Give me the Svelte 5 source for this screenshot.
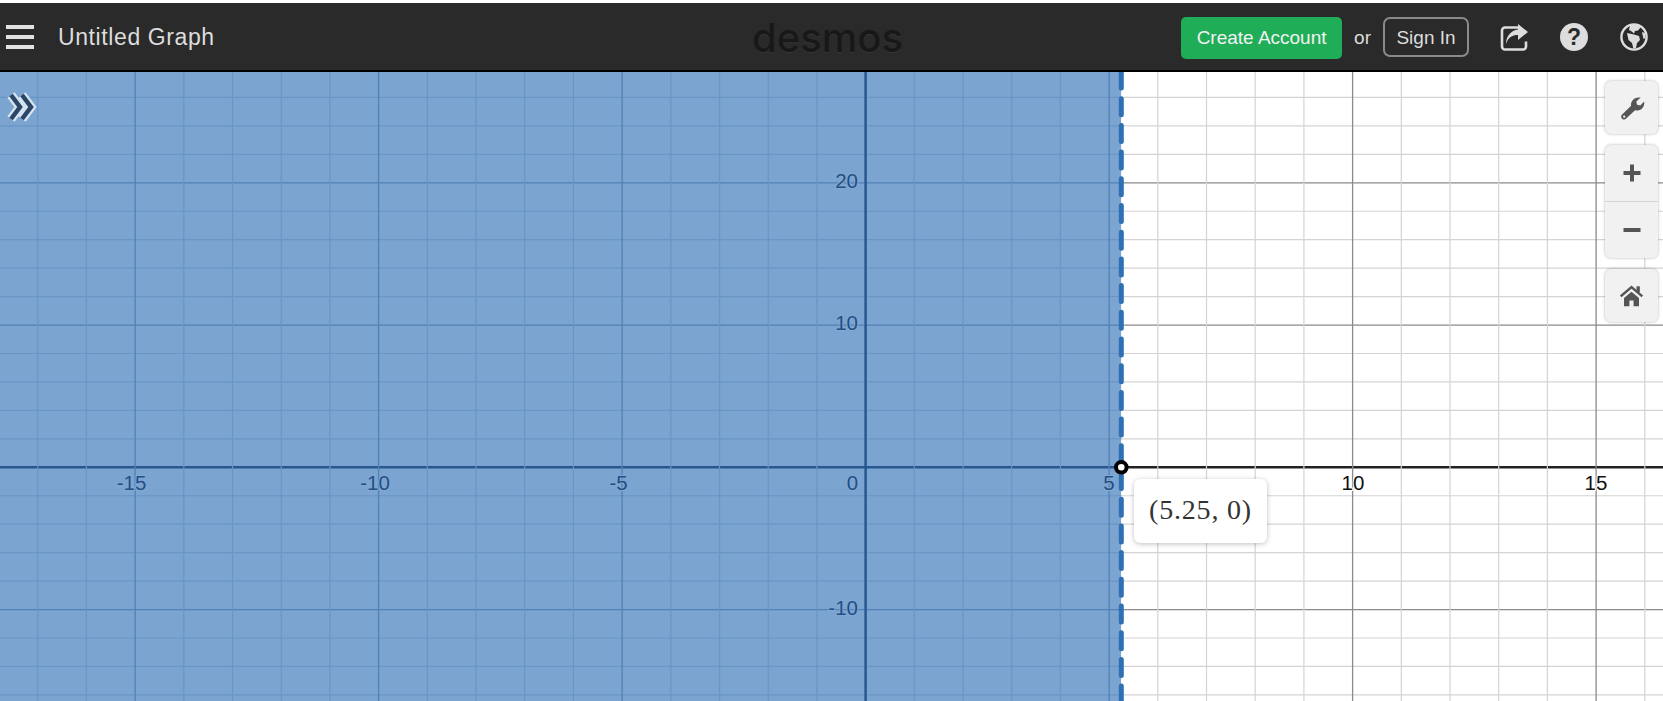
<script>
  // graph geometry, in page pixels
  const originX = 865.6;
  const originY = 467.3;
  const unitX = 48.7;
  const stepY = 28.45; // 2 y units
  const boundaryX = 1121.3;

  const range = (from, to) => Array.from({ length: to - from + 1 }, (_, i) => from + i);

  const vertical = range(-18, 16).map((i) => ({ x: originX + i * unitX, major: i % 5 === 0, axis: i === 0 }));
  const horizontal = range(-8, 14).map((i) => ({ y: originY - i * stepY, major: i % 5 === 0, axis: i === 0 }));

  const xLabels = [
    { text: "-15", x: 131.5, dark: true },
    { text: "-10", x: 375, dark: true },
    { text: "-5", x: 618.5, dark: true },
    { text: "0", x: 852.5, dark: true },
    { text: "5", x: 1109, dark: true },
    { text: "10", x: 1353 },
    { text: "15", x: 1596 },
  ];
  const yLabels = [
    { text: "20", y: 188 },
    { text: "10", y: 330 },
    { text: "-10", y: 615 },
  ];
</script>

{#snippet grid(cls)}
  <g class={cls}>
    {#each horizontal as l}
      <line x1="0" x2="1663" y1={l.y} y2={l.y} class:major={l.major} class:axis={l.axis} />
    {/each}
    {#each vertical as l}
      <line x1={l.x} x2={l.x} y1="72" y2="701" class:major={l.major} class:axis={l.axis} />
    {/each}
  </g>
{/snippet}

<div class="page">
  <header>
    <div class="left">
      <button class="menu" aria-label="Menu"><i></i><i></i><i></i></button>
      <span class="title">Untitled Graph</span>
    </div>
    <div class="logo">desmos</div>
    <div class="right">
      <button class="create">Create Account</button>
      <span class="or">or</span>
      <button class="signin">Sign In</button>
      <svg class="hicon" viewBox="0 0 28 28" aria-label="Share">
        <path d="M18 4.500H5a3 3 0 0 0-3 3v16a3 3 0 0 0 3 3h18a3 3 0 0 0 3-3v-5" fill="none" stroke="#ddd" stroke-width="2.600" />
        <path d="M18 1l10 8-10 8v-5C12 12 8 14.500 6 21 6 13 11 7.500 18 6.500z" fill="#ddd" />
      </svg>
      <svg class="hicon" viewBox="0 0 28 28" aria-label="Help">
        <circle cx="14" cy="14" r="14" fill="#ddd" />
        <text x="14" y="22" text-anchor="middle" class="qmark">?</text>
      </svg>
      <svg class="hicon" viewBox="0 0 28 28" aria-label="Language">
        <circle cx="14" cy="14" r="12.600" fill="none" stroke="#ddd" stroke-width="2.400" />
        <path d="M10 2l9-.5 1.500 3-2.500 3-3 .5-1 2.500-3-2.500-2-1z" fill="#ddd" />
        <path d="M7 10l7 1.500 5 1.500 1 4-3 3-1 5-2.500 1-1.500-6-3.500-3z" fill="#ddd" />
        <path d="M22 9l3 1 .5 5-2 1z" fill="#ddd" />
      </svg>
    </div>
  </header>

  <main class="graph">
    <svg class="plane" viewBox="0 72 1663 629" width="1663" height="629">
      <defs>
        <clipPath id="shaded"><rect x="0" y="72" width={boundaryX} height="629" /></clipPath>
        <clipPath id="clear"><rect x={boundaryX} y="72" width={1663 - boundaryX} height="629" /></clipPath>
      </defs>
      <g clip-path="url(#clear)">{@render grid("plain")}</g>
      <g clip-path="url(#shaded)">
        <rect x="0" y="72" width={boundaryX} height="629" fill="#7ba4d0" />
        {@render grid("tinted")}
      </g>

      <line class="edge" x1={boundaryX} x2={boundaryX} y1="72" y2="701" />

      {#each xLabels as l}
        <text class="tick" class:dark={l.dark} x={l.x} y="490" text-anchor="middle">{l.text}</text>
      {/each}
      {#each yLabels as l}
        <text class="tick dark" x="858" y={l.y} text-anchor="end">{l.text}</text>
      {/each}

      <circle cx={boundaryX} cy={originY} r="5.300" fill="#fff" stroke="#000" stroke-width="4" />
    </svg>

    <svg class="expand" viewBox="0 0 34 34" aria-label="Show list">
      <g fill="none" stroke="#d6e4f3" stroke-width="9">
        <polyline points="7,4 16,16 7,28" />
        <polyline points="18,4 27,16 18,28" />
      </g>
      <g fill="none" stroke="#2b4666" stroke-width="4.500">
        <polyline points="7,4 16,16 7,28" />
        <polyline points="18,4 27,16 18,28" />
      </g>
    </svg>

    <div class="tooltip">(5.25, 0)</div>

    <div class="tools">
      <button class="tool" aria-label="Settings">
        <svg viewBox="0 0 30 30" width="26" height="26">
          <path d="M3 23 14 12.500C13 7 18 1.500 25 3l-5 4.500.8 3.700 3.700 1L29 7.500C30 14 25 19.500 18.500 17.500L8 27.500C5 30 1 26 3 23z" fill="#555" />
          <circle cx="6" cy="25" r="1.300" fill="#f0f0f0" />
        </svg>
      </button>
      <div class="zoom">
        <button class="tool half" aria-label="Zoom in">
          <svg viewBox="0 0 20 20" width="20" height="20"><path d="M8 1.500h4V8h6.500v4H12v6.500H8V12H1.500V8H8z" fill="#555" /></svg>
        </button>
        <button class="tool half" aria-label="Zoom out">
          <svg viewBox="0 0 20 20" width="20" height="20"><rect x="1.500" y="8" width="17" height="4" fill="#555" /></svg>
        </button>
      </div>
      <button class="tool" aria-label="Default viewport">
        <svg viewBox="0 0 30 30" width="25" height="25">
          <path d="M2 16 15 5l13 11" fill="none" stroke="#555" stroke-width="3" />
          <rect x="21" y="4" width="4" height="7" fill="#555" />
          <path d="M6 18 15 10.500 24 18v10h-6.500v-7h-5v7H6z" fill="#555" />
        </svg>
      </button>
    </div>
  </main>
</div>

<style>
  :global(body) {
    margin: 0;
    background: #fff;
    overflow: hidden;
  }

  .page {
    padding-top: 3px;
    width: 1663px;
    height: 698px;
    font-family: "Liberation Sans", Arial, sans-serif;
  }

  button {
    font: inherit;
    padding: 0;
    cursor: pointer;
  }

  header {
    height: 67px;
    display: flex;
    align-items: center;
    background: #2a2a2a;
    border-bottom: 2px solid #000;
    padding: 0 15px 0 6px;
  }

  .left {
    width: 746px;
    display: flex;
    align-items: center;
    gap: 24px;
  }

  .menu {
    width: 28px;
    display: flex;
    flex-direction: column;
    gap: 6px;
    background: none;
    border: none;
  }

  .menu i {
    display: block;
    height: 4px;
    background: #e2e2e2;
  }

  .title {
    color: #ddd;
    font-size: 23px;
    letter-spacing: 0.600px;
    margin-top: 2px;
  }

  .logo {
    width: 150px;
    text-align: center;
    font-family: Inter, sans-serif;
    font-size: 40px;
    font-weight: 500;
    line-height: 1;
    color: #181818;
    text-shadow: 0 1px 0 #353535;
    margin-top: 2px;
  }

  .right {
    margin-left: auto;
    display: flex;
    align-items: center;
  }

  .create {
    width: 161px;
    height: 42px;
    margin-top: 3px;
    background: #20ad58;
    color: #f2f2f2;
    border: none;
    border-radius: 5px;
    font-size: 19px;
  }

  .or {
    color: #ddd;
    font-size: 19px;
    margin: 2px 12px 0 12px;
  }

  .signin {
    width: 86px;
    height: 40px;
    margin-top: 1px;
    padding-top: 1px;
    background: none;
    color: #ddd;
    border: 2px solid #8a8a8a;
    border-radius: 7px;
    font-size: 19px;
    margin-right: 31px;
  }

  .hicon {
    width: 28px;
    height: 28px;
    margin-right: 32px;
  }

  .hicon:last-child {
    margin-right: 0;
  }

  .qmark {
    font-size: 23px;
    font-weight: 700;
    fill: #2a2a2a;
  }

  .graph {
    position: relative;
    height: 629px;
    overflow: hidden;
  }

  .plane {
    display: block;
  }

  line {
    stroke-width: 1.200;
  }

  .plain line {
    stroke: #d4d4d4;
  }

  .plain line.major {
    stroke: #8a8a8a;
    stroke-width: 1.300;
  }

  .plain line.axis {
    stroke: #222;
    stroke-width: 2.500;
  }

  .tinted line {
    stroke: #6a95c4;
  }

  .tinted line.major {
    stroke: #5281b5;
    stroke-width: 1.300;
  }

  .tinted line.axis {
    stroke: #28588f;
    stroke-width: 2.500;
  }

  .edge {
    stroke: #2d70b3;
    stroke-width: 5;
    stroke-linecap: round;
    stroke-dasharray: 16 10.700;
  }

  .tick {
    font-size: 20.500px;
    fill: #111;
    paint-order: stroke;
    stroke: #fff;
    stroke-width: 2px;
  }

  .tick.dark {
    fill: #234f85;
    stroke: #82a9d3;
  }

  .expand {
    position: absolute;
    left: 4px;
    top: 19px;
    width: 34px;
    height: 34px;
  }

  .tooltip {
    position: absolute;
    left: 1134px;
    top: 407px;
    width: 133px;
    height: 64px;
    box-sizing: border-box;
    padding-bottom: 3px;
    display: flex;
    align-items: center;
    justify-content: center;
    background: #fff;
    border-radius: 6px;
    box-shadow: 0 1px 5px rgba(0, 0, 0, 0.25);
    font-family: "Liberation Serif", "Times New Roman", serif;
    font-size: 28px;
    letter-spacing: 0.800px;
    color: #333;
  }

  .tools {
    position: absolute;
    right: 5px;
    top: 9px;
    width: 53px;
    display: flex;
    flex-direction: column;
    gap: 11px;
  }

  .tool {
    width: 53px;
    height: 53px;
    display: flex;
    align-items: center;
    justify-content: center;
    background: #f1f1f1;
    border: none;
    border-radius: 6px;
    box-shadow: 0 0 3px rgba(0, 0, 0, 0.3);
  }

  .zoom {
    display: flex;
    flex-direction: column;
    height: 113px;
    border-radius: 6px;
    background: #f1f1f1;
    box-shadow: 0 0 3px rgba(0, 0, 0, 0.3);
  }

  .half {
    flex: 1;
    height: auto;
    box-shadow: none;
    background: none;
  }

  .half + .half {
    border-top: 1px solid #d4d4d4;
    border-radius: 0 0 6px 6px;
  }
</style>
